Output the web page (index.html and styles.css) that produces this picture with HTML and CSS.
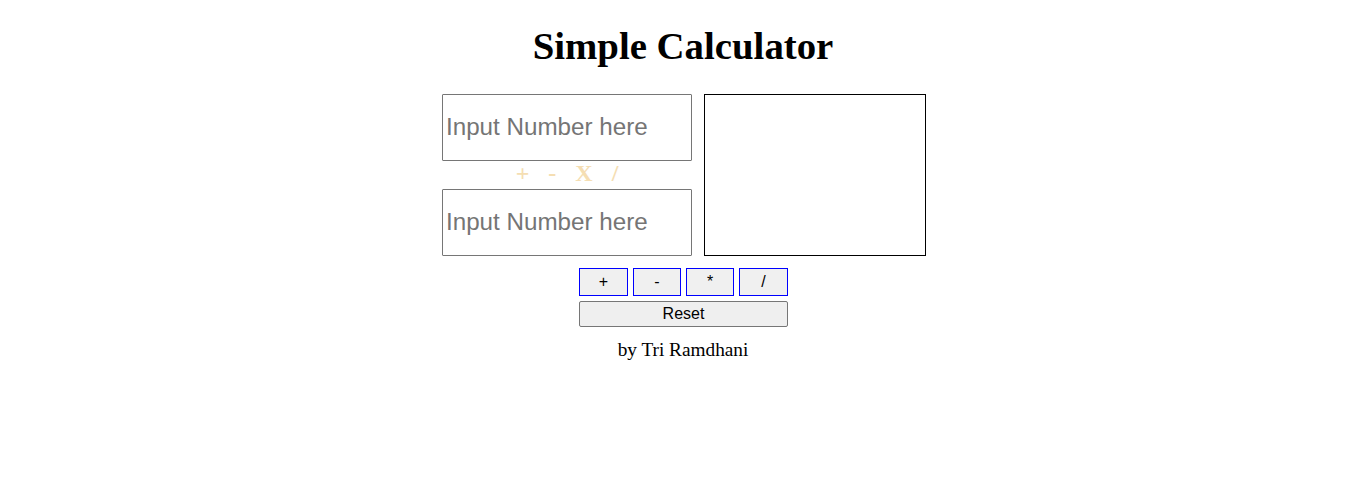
FILE: index.html
```html
<!DOCTYPE html>
<html>
<head>
<meta charset="utf-8">
<title>Simple Calculator</title>
<link rel="stylesheet" href="styles.css">
</head>
<body>
<h1 class="title">Simple Calculator</h1>
<div class="calc">
  <div class="inputs">
    <input class="num" type="text" placeholder="Input Number here">
    <div class="ops"><span>+</span><span>-</span><span>X</span><span>/</span></div>
    <input class="num" type="text" placeholder="Input Number here">
  </div>
  <div class="result"></div>
</div>
<div class="op-buttons">
  <button class="btn btn-wide">+</button>
  <button class="btn">-</button>
  <button class="btn">*</button>
  <button class="btn btn-wide">/</button>
</div>
<div class="reset-row">
  <button class="reset">Reset</button>
</div>
<p class="credit">by Tri Ramdhani</p>
</body>
</html>
```

FILE: styles.css
```css
html, body {
  background: #ffffff;
}
body {
  margin: 8px;
  font-family: "Liberation Serif", "Times New Roman", serif;
  color: #000;
  text-align: center;
}
.title {
  margin: 16px 0 26px;
  font-size: 38.8px;
  line-height: 44px;
  font-weight: bold;
}
.calc {
  display: flex;
  justify-content: center;
  gap: 12px;
  padding-left: 2px;
}
.inputs {
  display: flex;
  flex-direction: column;
  width: 250px;
}
.num {
  box-sizing: border-box;
  width: 250px;
  height: 67px;
  margin: 0;
  border: 1px solid #767676;
  border-radius: 1px;
  padding: 0 3px 2px;
  font-family: "Liberation Sans", Arial, sans-serif;
  font-size: 24.2px;
  color: #000;
  background: #fff;
}
.num::placeholder {
  color: #757575;
}
.ops {
  display: flex;
  justify-content: center;
  gap: 19px;
  height: 28px;
  line-height: 24px;
  font-size: 24px;
  font-weight: bold;
  color: #f5deb3;
}
.result {
  box-sizing: border-box;
  width: 222px;
  height: 162px;
  border: 1px solid #000;
}
.op-buttons {
  display: flex;
  justify-content: center;
  gap: 5px;
  margin-top: 12px;
  padding-left: 1px;
}
.btn {
  -webkit-appearance: none;
  appearance: none;
  box-sizing: border-box;
  width: 48px;
  height: 28px;
  margin: 0;
  padding: 0;
  border: 1px solid #0000ff;
  border-radius: 0;
  background: #f0f0f0;
  font-family: "Liberation Sans", Arial, sans-serif;
  font-size: 16px;
  color: #000;
}
.btn-wide {
  width: 49px;
}
.reset-row {
  display: flex;
  justify-content: center;
  margin-top: 5px;
  padding-left: 1px;
}
.reset {
  box-sizing: border-box;
  width: 209px;
  height: 26px;
  margin: 0;
  padding: 0;
  border: 1px solid #767676;
  border-radius: 2px;
  background: #efefef;
  font-family: "Liberation Sans", Arial, sans-serif;
  font-size: 16px;
  color: #000;
}
.credit {
  margin: 12px 0 0;
  font-size: 19.3px;
  line-height: 22px;
}
```
